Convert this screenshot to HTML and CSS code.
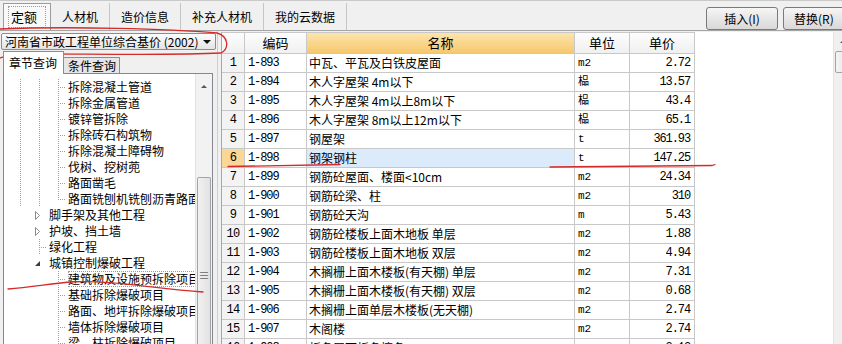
FILE: index.html
```html
<!DOCTYPE html>
<html lang="zh-CN">
<head>
    <meta charset="UTF-8">
    <title>定额</title>
    <link rel="stylesheet" href="styles.css">
</head>
<body>

<div class="app">

    <div class="topbar">
        <div class="tabs">
            <div class="tab active"><span class="focus">定额</span></div>
            <div class="tab">人材机</div>
            <div class="tab">造价信息</div>
            <div class="tab">补充人材机</div>
            <div class="tab">我的云数据</div>
        </div>
        <div class="btns">
            <button class="btn">插入(I)</button>
            <button class="btn btn-cut">替换(R)</button>
        </div>
    </div>

    <div class="main">

        <div class="left">
            <div class="lib-select">
                <span>河南省市政工程单位综合基价 (2002)</span>
                <span class="arrow"></span>
            </div>

            <div class="subtabs">
                <div class="subtab active">章节查询</div>
                <div class="subtab">条件查询</div>
            </div>

            <div class="tree">
                <div class="tree-body">
                    <div class="trow"><span class="g1 line"></span><span class="g2 line"></span><span class="c3 tee"></span><span class="txt">拆除混凝土管道</span></div>
                    <div class="trow"><span class="g1 line"></span><span class="g2 line"></span><span class="c3 tee"></span><span class="txt">拆除金属管道</span></div>
                    <div class="trow"><span class="g1 line"></span><span class="g2 line"></span><span class="c3 tee"></span><span class="txt">镀锌管拆除</span></div>
                    <div class="trow"><span class="g1 line"></span><span class="g2 line"></span><span class="c3 tee"></span><span class="txt">拆除砖石构筑物</span></div>
                    <div class="trow"><span class="g1 line"></span><span class="g2 line"></span><span class="c3 tee"></span><span class="txt">拆除混凝土障碍物</span></div>
                    <div class="trow"><span class="g1 line"></span><span class="g2 line"></span><span class="c3 tee"></span><span class="txt">伐树、挖树蔸</span></div>
                    <div class="trow"><span class="g1 line"></span><span class="g2 line"></span><span class="c3 tee"></span><span class="txt">路面凿毛</span></div>
                    <div class="trow"><span class="g1 line"></span><span class="g2 line"></span><span class="c3 corner"></span><span class="txt">路面铣刨机铣刨沥青路面</span></div>

                    <div class="trow"><span class="g1"></span><span class="c2">
                        <svg width="9" height="9" viewBox="0 0 9 9"><path d="M2.5 0.5 L6.5 4.5 L2.5 8.5 Z" fill="#fff" stroke="#8c8c8c"/></svg>
                    </span><span class="txt">脚手架及其他工程</span></div>
                    <div class="trow"><span class="g1"></span><span class="c2">
                        <svg width="9" height="9" viewBox="0 0 9 9"><path d="M2.5 0.5 L6.5 4.5 L2.5 8.5 Z" fill="#fff" stroke="#8c8c8c"/></svg>
                    </span><span class="txt">护坡、挡土墙</span></div>
                    <div class="trow"><span class="g1"></span><span class="c2 tee"></span><span class="txt">绿化工程</span></div>
                    <div class="trow"><span class="g1"></span><span class="c2">
                        <svg width="9" height="9" viewBox="0 0 9 9"><path d="M7 2 L7 7 L2 7 Z" fill="#3c3c3c"/></svg>
                    </span><span class="txt">城镇控制爆破工程</span></div>

                    <div class="trow"><span class="g1"></span><span class="g2"></span><span class="c3 tee"></span><span class="txt sel">建筑物及设施预拆除项目</span></div>
                    <div class="trow"><span class="g1"></span><span class="g2"></span><span class="c3 tee"></span><span class="txt">基础拆除爆破项目</span></div>
                    <div class="trow"><span class="g1"></span><span class="g2"></span><span class="c3 tee"></span><span class="txt">路面、地坪拆除爆破项目</span></div>
                    <div class="trow"><span class="g1"></span><span class="g2"></span><span class="c3 tee"></span><span class="txt">墙体拆除爆破项目</span></div>
                    <div class="trow"><span class="g1"></span><span class="g2"></span><span class="c3 tee"></span><span class="txt">梁、柱拆除爆破项目</span></div>
                </div>
                <div class="vscroll">
                    <div class="sb-btn"><span class="up"></span></div>
                    <div class="sb-track"></div>
                    <div class="sb-thumb"><span class="grip">≡</span></div>
                </div>
            </div>
        </div>

        <div class="splitter"></div>

        <div class="gridwrap">
            <div class="grid">
                <div class="hd"></div>
                <div class="hd">编码</div>
                <div class="hd sorted">名称</div>
                <div class="hd">单位</div>
                <div class="hd">单价</div>

                <div class="rn">1</div><div class="code">1-893</div><div class="name">中瓦、平瓦及白铁皮屋面</div><div class="unit">m2</div><div class="price">2.72</div>
                <div class="rn">2</div><div class="code">1-894</div><div class="name">木人字屋架 4m以下</div><div class="unit">榀</div><div class="price">13.57</div>
                <div class="rn">3</div><div class="code">1-895</div><div class="name">木人字屋架 4m以上8m以下</div><div class="unit">榀</div><div class="price">43.4</div>
                <div class="rn">4</div><div class="code">1-896</div><div class="name">木人字屋架 8m以上12m以下</div><div class="unit">榀</div><div class="price">65.1</div>
                <div class="rn">5</div><div class="code">1-897</div><div class="name">钢屋架</div><div class="unit">t</div><div class="price">361.93</div>
                <div class="rn cur">6</div><div class="code">1-898</div><div class="name cur">钢架钢柱</div><div class="unit">t</div><div class="price">147.25</div>
                <div class="rn">7</div><div class="code">1-899</div><div class="name">钢筋砼屋面、楼面&lt;10cm</div><div class="unit">m2</div><div class="price">24.34</div>
                <div class="rn">8</div><div class="code">1-900</div><div class="name">钢筋砼梁、柱</div><div class="unit">m2</div><div class="price">310</div>
                <div class="rn">9</div><div class="code">1-901</div><div class="name">钢筋砼天沟</div><div class="unit">m</div><div class="price">5.43</div>
                <div class="rn">10</div><div class="code">1-902</div><div class="name">钢筋砼楼板上面木地板 单层</div><div class="unit">m2</div><div class="price">1.88</div>
                <div class="rn">11</div><div class="code">1-903</div><div class="name">钢筋砼楼板上面木地板 双层</div><div class="unit">m2</div><div class="price">4.94</div>
                <div class="rn">12</div><div class="code">1-904</div><div class="name">木搁栅上面木楼板(有天棚) 单层</div><div class="unit">m2</div><div class="price">7.31</div>
                <div class="rn">13</div><div class="code">1-905</div><div class="name">木搁栅上面木楼板(有天棚) 双层</div><div class="unit">m2</div><div class="price">0.68</div>
                <div class="rn">14</div><div class="code">1-906</div><div class="name">木搁栅上面单层木楼板(无天棚)</div><div class="unit">m2</div><div class="price">2.74</div>
                <div class="rn">15</div><div class="code">1-907</div><div class="name">木阁楼</div><div class="unit">m2</div><div class="price">2.74</div>
                <div class="rn">16</div><div class="code">1-908</div><div class="name">板条层面板条檩条</div><div class="unit">m2</div><div class="price">3.12</div>
            </div>
            <div class="blank"></div>
            <div class="gscroll">
                <div class="sb-btn"><span class="up"></span></div>
                <div class="g-thumb"></div>
                <div class="sb-track"></div>
            </div>
        </div>

    </div>

    <!-- 红笔批注 -->
    <svg class="marks" width="851" height="344" viewBox="0 0 851 344">
        <g fill="none" stroke="#d42a2a" stroke-width="1.3" stroke-linecap="round">
            <path d="M0 29 C70 26 170 29 217 33 C228 36 230 48 221 53 C160 56 60 53 18 54 C8 55 3 57 0 58"/>
            <path d="M228 166.5 C270 165.5 310 165 340 164.5"/>
            <path d="M550 167 C610 166.5 670 166 712 165.5 L715 164.5"/>
            <path d="M8 289 C30 287 50 284 70 282 C110 280 150 288 203 292"/>
        </g>
    </svg>

</div>

</body>
</html>
```

FILE: styles.css
```css
html, body {
    margin: 0;
    padding: 0;
    overflow: hidden;
}

body {
    font-family: "Noto Sans CJK SC", sans-serif;
    font-size: 12px;
    color: #000;
    background: #f0f0f0;
}

.app {
    position: relative;
    width: 851px;
    height: 344px;
    overflow: hidden;
    background: #f0f0f0;
}

/* 顶部页签 */
.topbar {
    display: flex;
    justify-content: space-between;
    height: 31px;
    box-sizing: border-box;
    border-top: 1px solid #c9c9c9;
    border-bottom: 1px solid #a5a5a5;
}

.tabs {
    display: flex;
    padding-top: 2px;
}

.tab {
    height: 27px;
    line-height: 27px;
    padding: 0 11px;
    border-right: 1px solid #c6c6c6;
    white-space: nowrap;
    font-size: 12px;
}

.tab.active {
    margin-left: 3px;
    padding: 0 4px;
    border: 1px solid #9c9c9c;
    border-bottom: none;
    background: #f9f9f9;
    height: 26px;
    line-height: 24px;
    font-size: 13px;
}

.tab .focus {
    display: inline-block;
    padding: 0 8px 0 2px;
    border: 1px dotted #9a9a9a;
    line-height: 20px;
    margin-top: 2px;
}

.btns {
    display: flex;
    gap: 5px;
    padding-top: 6px;
}

.btn {
    width: 72px;
    height: 23px;
    padding: 0;
    font-family: "Noto Sans CJK SC", sans-serif;
    font-size: 12px;
    color: #000;
    border: 1px solid #7a7a7a;
    border-radius: 3px;
    background: linear-gradient(#f6f6f6, #e6e6e6 50%, #d9d9d9);
}

.btn-cut {
    width: 68px;
    text-align: left;
    padding-left: 10px;
}

/* 主体 */
.main {
    display: flex;
    height: 313px;
}

.left {
    width: 217px;
    flex: none;
    display: flex;
    flex-direction: column;
}

.lib-select {
    margin: 2px 0 0 1px;
    width: 215px;
    height: 17px;
    box-sizing: border-box;
    border: 1px solid #8c8c8c;
    border-radius: 2px;
    background: linear-gradient(#fdfdfd, #e4e4e4);
    padding-left: 3px;
    line-height: 15px;
    display: flex;
    justify-content: space-between;
    align-items: center;
    white-space: nowrap;
}

.lib-select .arrow {
    width: 0;
    height: 0;
    border-top: 4px solid #111;
    border-left: 4px solid transparent;
    border-right: 4px solid transparent;
    margin-right: 4px;
}

.subtabs {
    display: flex;
    align-items: flex-end;
    margin: 1px 0 0 3px;
    height: 22px;
}

.subtab {
    height: 16px;
    line-height: 15px;
    padding: 0 3px 0 4px;
    box-sizing: border-box;
    border: 1px solid #8c8c8c;
    border-bottom: none;
    border-left: none;
    background: #e6e6e6;
    font-size: 12px;
}

.subtab.active {
    position: relative;
    z-index: 1;
    height: 23px;
    line-height: 21px;
    padding: 0 6px 0 5px;
    border-left: 1px solid #8c8c8c;
    background: #fff;
    margin-bottom: -1px;
    font-size: 12px;
}

.tree {
    margin-left: 3px;
    width: 210px;
    flex: 1;
    box-sizing: border-box;
    border: 1px solid #828790;
    background: #fff;
    display: flex;
}

.tree-body {
    flex: 1;
    overflow: hidden;
    padding-top: 5px;
}

.trow {
    display: flex;
    height: 16px;
    line-height: 16px;
    white-space: nowrap;
    font-size: 12px;
}

.g1, .g2, .c2, .c3 {
    flex: none;
    height: 16px;
}

.g1 { width: 20px; }
.g2 { width: 19px; }
.c2 { width: 23px; display: flex; align-items: center; padding-left: 9px; box-sizing: border-box; }
.c3 { width: 23px; }

.g1.line {
    background: repeating-linear-gradient(#a0a0a0 0 1px, transparent 1px 2px) 16px 0 / 1px 16px no-repeat;
}

.g2.line {
    background: repeating-linear-gradient(#a0a0a0 0 1px, transparent 1px 2px) 15px 0 / 1px 16px no-repeat;
}

.tee {
    background:
        repeating-linear-gradient(#a0a0a0 0 1px, transparent 1px 2px) 15px 0 / 1px 16px no-repeat,
        repeating-linear-gradient(90deg, #a0a0a0 0 1px, transparent 1px 2px) 17px 8px / 7px 1px no-repeat;
}

.corner {
    background:
        repeating-linear-gradient(#a0a0a0 0 1px, transparent 1px 2px) 15px 0 / 1px 9px no-repeat,
        repeating-linear-gradient(90deg, #a0a0a0 0 1px, transparent 1px 2px) 17px 8px / 7px 1px no-repeat;
}

.txt {
    margin-left: 2px;
}

.txt.sel {
    outline: 1px dotted #9a9a9a;
    outline-offset: -1px;
    padding-right: 20px;
}

.vscroll {
    width: 16px;
    flex: none;
    display: flex;
    flex-direction: column;
    background: #f2f2f2;
    border-left: 1px solid #e2e2e2;
}

.sb-btn {
    height: 17px;
    flex: none;
    display: flex;
    align-items: center;
    justify-content: center;
}

.vscroll .sb-btn {
    margin-top: 4px;
}

.up {
    width: 0;
    height: 0;
    border-bottom: 3px solid #555;
    border-left: 3px solid transparent;
    border-right: 3px solid transparent;
}

.vscroll .sb-track {
    height: 82px;
    flex: none;
}

.sb-thumb {
    flex: 1;
    margin: 0 1px;
    border: 1px solid #a3a3a3;
    border-bottom: none;
    border-radius: 2px 2px 0 0;
    background: linear-gradient(90deg, #f1f1f1, #e2e2e2);
    display: flex;
    justify-content: center;
    padding-top: 91px;
    color: #666;
    font-size: 11px;
    line-height: 12px;
}

.splitter {
    width: 3px;
    flex: none;
    border-left: 1px solid #cfcfcf;
}

/* 定额列表 */
.gridwrap {
    flex: 1;
    display: flex;
    margin-top: 1px;
    background: #fff;
}

.grid {
    display: grid;
    grid-template-columns: 23px 62px 268px 55px 65px;
    grid-template-rows: 21px;
    grid-auto-rows: 19px;
    align-content: start;
    border-left: 1px solid #a8a8a8;
    border-top: 1px solid #c8c8c8;
    background: #fff;
}

.grid > div {
    box-sizing: border-box;
    border-right: 1px solid #c8c8c8;
    border-bottom: 1px solid #c8c8c8;
    line-height: 18px;
    padding: 0 3px;
    overflow: hidden;
    white-space: nowrap;
}

.grid .hd {
    text-align: center;
    line-height: 20px;
    font-size: 13px;
    background: linear-gradient(#fdfdfd, #f0f0f0);
}

.grid .hd.sorted {
    background: linear-gradient(#fde4ad, #f6c86d);
}

.grid .rn {
    text-align: center;
    padding: 0;
    background: #f3f3f3;
    font-family: "Liberation Mono", monospace;
    font-size: 12px;
    letter-spacing: -0.8px;
}

.grid .rn.cur {
    background: #fbd797;
}

.grid .code,
.grid .price {
    font-family: "Liberation Mono", monospace;
    font-size: 12px;
    letter-spacing: -1.1px;
}

.grid .price {
    text-align: right;
    padding-right: 4px;
}

.grid .unit {
    font-family: "Liberation Mono", "Noto Sans CJK SC", monospace;
    font-size: 11px;
}

.grid .name {
    font-size: 12px;
    padding-left: 2px;
}

.grid .name.cur {
    background: #dcebfc;
}

.blank {
    flex: 1;
    background: #fff;
}

.gscroll {
    width: 17px;
    flex: none;
    display: flex;
    flex-direction: column;
    background: #f0f0f0;
    border-left: 1px solid #e4e4e4;
}

.gscroll .sb-btn {
    height: 19px;
}

.g-thumb {
    height: 20px;
    flex: none;
    margin: 0 1px;
    border: 1px solid #a3a3a3;
    border-radius: 2px;
    background: linear-gradient(90deg, #f4f4f4, #e3e3e3);
}

.gscroll .sb-track {
    flex: 1;
}

/* 批注层 */
.marks {
    position: absolute;
    left: 0;
    top: 0;
    pointer-events: none;
}
```
